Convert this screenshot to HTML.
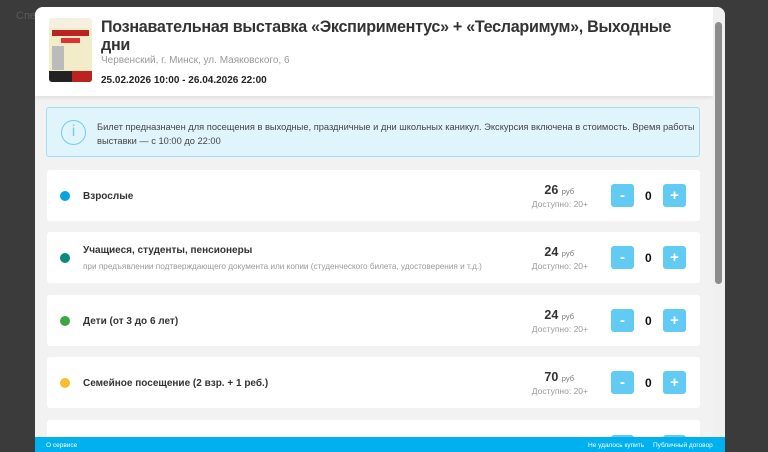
<!DOCTYPE html>
<html><head><meta charset="utf-8"><style>
*{box-sizing:border-box;margin:0;padding:0}
html,body{width:768px;height:452px;overflow:hidden}
body{background:#3b3b3b;font-family:"Liberation Sans","DejaVu Sans",sans-serif;position:relative}
.bgtxt{position:absolute;top:10px;left:16px;color:#5a5a5a;font-size:11px}
.modal{position:absolute;left:35px;top:7px;width:690px;height:445px;background:#f2f2f2;border-radius:8px 8px 0 0;overflow:hidden}
.head{position:absolute;left:0;top:0;width:678px;height:89px;background:#fff;box-shadow:0 2px 4px rgba(0,0,0,.08)}
.poster{position:absolute;left:14px;top:11px;width:43px;height:64px;border-radius:3px;background:#f3ecc8;overflow:hidden}
.title{position:absolute;left:66px;top:11px;white-space:nowrap;font-size:16.8px;letter-spacing:-0.3px;font-weight:bold;color:#333;line-height:18px;transform:scaleX(0.96);transform-origin:left top}
.addr{position:absolute;left:66px;top:48px;font-size:10px;color:#999}
.date{position:absolute;left:66px;top:68px;font-size:10px;font-weight:bold;color:#222}
.sb{position:absolute;left:678px;top:0;width:12px;height:460px;background:#f0f0f0}
.thumb{position:absolute;left:680px;top:15px;width:7px;height:262px;background:#8c8c8c;border-radius:4px}
.info{position:absolute;left:11px;top:100px;width:654px;height:50px;background:#e0f4fb;border:1px solid #a5def2;border-radius:3px}
.info .ic{position:absolute;left:14px;top:12px;width:25px;height:25px;border:1.5px solid #6fcdf0;border-radius:50%;color:#6fcdf0;text-align:center;font-size:16px;line-height:22px}
.info p{position:absolute;left:50px;top:12px;font-size:9.3px;color:#444;line-height:14px;width:598px}
.row{position:absolute;left:12px;width:653px;height:51px;background:#fff;border-radius:3px}
.dot{position:absolute;left:13px;width:10px;height:10px;border-radius:50%}
.nm{position:absolute;left:36px;font-size:10px;font-weight:bold;color:#333}
.sub{position:absolute;left:36px;top:30px;font-size:8.2px;color:#999}
.pr{position:absolute;right:126px;top:13px;text-align:right;font-size:12.5px;font-weight:bold;color:#333}
.pr small{font-size:7.5px;font-weight:normal;color:#777}
.av{position:absolute;right:112px;top:29px;font-size:8.5px;color:#999}
.b{position:absolute;top:14px;width:23px;height:23px;background:#62cbf3;border-radius:3px;color:#fff;text-align:center;font-size:15px;line-height:24px;font-weight:bold}
.q{position:absolute;left:598px;top:19px;font-size:12px;font-weight:bold;color:#111}
.foot{position:absolute;left:0;top:430px;width:690px;height:30px;background:#00b0ef;color:#fff;font-size:6.5px}
</style></head><body>
<div class="bgtxt">Спе</div>
<div class="modal">
<div class="head">
 <div class="poster">
  <div style="height:10px;background:#f5f0e0"></div>
  <div style="margin:2px 3px;height:6px;background:#b22"></div>
  <div style="margin:2px 12px;height:5px;background:#d33"></div>
  <div style="position:absolute;left:3px;top:28px;width:12px;height:24px;background:#bbb"></div>
  <div style="position:absolute;left:0;bottom:0;width:43px;height:11px;background:#222"></div>
  <div style="position:absolute;right:0;bottom:0;width:20px;height:11px;background:#b22"></div>
 </div>
 <div class="title">Познавательная выставка «Экспириментус» + «Тесларимум», Выходные<br>дни</div>
 <div class="addr">Червенский, г. Минск, ул. Маяковского, 6</div>
 <div class="date">25.02.2026 10:00 - 26.04.2026 22:00</div>
</div>
<div class="info"><div class="ic">i</div><p>Билет предназначен для посещения в выходные, праздничные и дни школьных каникул. Экскурсия включена в стоимость. Время работы выставки — с 10:00 до 22:00</p></div>

<div class="row" style="top:163px"><div class="dot" style="top:21px;background:#04a4e4"></div><div class="nm" style="top:21px">Взрослые</div><div class="pr">26 <small>руб</small></div><div class="av">Доступно: 20+</div><div class="b" style="left:564px">-</div><div class="q">0</div><div class="b" style="left:616px">+</div></div>
<div class="row" style="top:225px"><div class="dot" style="top:21px;background:#0a8a7a"></div><div class="nm" style="top:13px">Учащиеся, студенты, пенсионеры</div><div class="sub">при предъявлении подтверждающего документа или копии (студенческого билета, удостоверения и т.д.)</div><div class="pr">24 <small>руб</small></div><div class="av">Доступно: 20+</div><div class="b" style="left:564px">-</div><div class="q">0</div><div class="b" style="left:616px">+</div></div>
<div class="row" style="top:288px"><div class="dot" style="top:21px;background:#43a447"></div><div class="nm" style="top:21px">Дети (от 3 до 6 лет)</div><div class="pr">24 <small>руб</small></div><div class="av">Доступно: 20+</div><div class="b" style="left:564px">-</div><div class="q">0</div><div class="b" style="left:616px">+</div></div>
<div class="row" style="top:350px"><div class="dot" style="top:21px;background:#f8bf2c"></div><div class="nm" style="top:21px">Семейное посещение (2 взр. + 1 реб.)</div><div class="pr">70 <small>руб</small></div><div class="av">Доступно: 20+</div><div class="b" style="left:564px">-</div><div class="q">0</div><div class="b" style="left:616px">+</div></div>
<div class="row" style="top:413px"><div class="b" style="left:564px;top:15px"></div><div class="b" style="left:616px;top:15px"></div></div>

<div class="sb"></div><div class="thumb"></div>
<div class="foot"><span style="position:absolute;left:11px;top:5px">О сервисе</span><span style="position:absolute;left:553px;top:5px">Не удалось купить</span><span style="position:absolute;left:618px;top:5px">Публичный договор</span></div>
</div>
</body></html>
